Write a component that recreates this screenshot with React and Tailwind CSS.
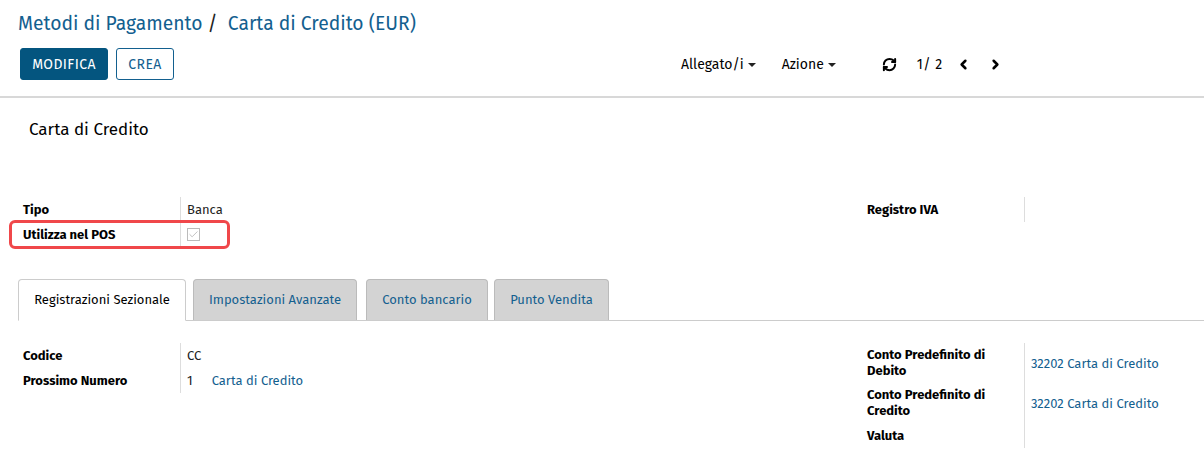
import React from 'react';
import { RefreshCw, ChevronLeft, ChevronRight, Check } from 'lucide-react';

const font = { fontFamily: '"Fira Sans", Lato, "Noto Sans", sans-serif' };

const Caret = () => (
  <span className="inline-block ml-1 align-middle border-x-[4px] border-x-transparent border-t-[4px] border-t-[#222]" />
);

const Field = ({ label, children }) => (
  <div className="flex">
    <div className="w-[157px] shrink-0 font-bold text-[13px] leading-[15px] text-black py-[5px]">{label}</div>
    <div className="flex-1 border-l border-[#ddd] pl-[6px] text-[13px] leading-[15px] flex items-center">{children}</div>
  </div>
);

const TallField = ({ label, children }) => (
  <div className="flex">
    <div className="w-[157px] shrink-0 font-bold text-[13px] leading-[16px] text-black py-[4px]">{label}</div>
    <div className="flex-1 border-l border-[#ddd] pl-[6px] text-[13px] leading-[15px] flex items-center text-[#13608f]">{children}</div>
  </div>
);

export default function App() {
  return (
    <div className="w-[1204px] h-[466px] bg-white text-[#222] relative overflow-hidden" style={font}>
      {/* Control panel */}
      <div className="px-[18px] pt-[12px] pb-[16px] border-b-2 border-[#d8d8d8]">
        <div className="text-[19.3px] leading-[24px] text-[#13608f]">
          Metodi di Pagamento <span className="text-[#222]">/</span>&nbsp; Carta di Credito (EUR)
        </div>
        <div className="flex items-center mt-[12px]">
          <button className="ml-[2px] h-[32px] w-[88px] rounded-[3px] bg-[#04557f] text-white text-[14px] tracking-[0.4px] border border-[#04557f]">MODIFICA</button>
          <button className="ml-[8px] h-[32px] w-[58px] rounded-[3px] bg-white text-[#13608f] text-[14px] tracking-[0.4px] border border-[#13608f]">CREA</button>
          <div className="ml-[507px] flex items-center text-[14px] text-black">
            <span>Allegato/i<Caret /></span>
            <span className="ml-[26px]">Azione<Caret /></span>
            <RefreshCw className="ml-[46px] w-[15px] h-[15px]" strokeWidth={3.2} />
            <span className="ml-[20px] tracking-[0.5px]">1/ 2</span>
            <ChevronLeft className="ml-[13px] w-[15px] h-[15px]" strokeWidth={4} />
            <ChevronRight className="ml-[17px] w-[15px] h-[15px]" strokeWidth={4} />
          </div>
        </div>
      </div>

      {/* Form sheet */}
      <div className="pt-[22px]">
        <div className="pl-[29px] text-[17px] leading-[20px] text-black">Carta di Credito</div>

        <div className="flex mt-[57px] pl-[23px]">
          <div className="flex-1 flex flex-col">
            <Field label="Tipo">Banca</Field>
            <Field label="Utilizza nel POS">
              <span className="w-[13px] h-[13px] border border-[#bbb] flex items-center justify-center">
                <Check className="w-[11px] h-[11px] text-[#bbb]" strokeWidth={2} />
              </span>
            </Field>
          </div>
          <div className="w-[337px] flex flex-col">
            <Field label="Registro IVA"><span className="h-[15px]" /></Field>
          </div>
        </div>

        {/* Tabs */}
        <div className="flex items-end mt-[32px] ml-[18px] border-b border-[#ccc] h-[42px] text-[13px]">
          <div className="h-[42px] w-[168px] -mb-px border border-[#ccc] border-b-white bg-white rounded-t-[4px] flex items-center justify-center text-black">Registrazioni Sezionale</div>
          <div className="ml-[7px] h-[41px] w-[164px] border border-[#bbb] border-b-0 bg-[#d3d3d3] rounded-t-[4px] flex items-center justify-center text-[#13608f]">Impostazioni Avanzate</div>
          <div className="ml-[9px] h-[41px] w-[122px] border border-[#bbb] border-b-0 bg-[#d3d3d3] rounded-t-[4px] flex items-center justify-center text-[#13608f]">Conto bancario</div>
          <div className="ml-[6px] h-[41px] w-[115px] border border-[#bbb] border-b-0 bg-[#d3d3d3] rounded-t-[4px] flex items-center justify-center text-[#13608f]">Punto Vendita</div>
        </div>

        <div className="flex mt-[22px] pl-[23px]">
          <div className="flex-1 flex flex-col self-start">
            <Field label="Codice">CC</Field>
            <Field label="Prossimo Numero">
              <span>1</span>
              <span className="ml-[19px] text-[#13608f]">Carta di Credito</span>
            </Field>
          </div>
          <div className="w-[337px] flex flex-col">
            <TallField label={<>Conto Predefinito di<br />Debito</>}>32202 Carta di Credito</TallField>
            <TallField label={<>Conto Predefinito di<br />Credito</>}>32202 Carta di Credito</TallField>
            <Field label="Valuta"><span className="h-[15px]" /></Field>
          </div>
        </div>
      </div>

      {/* Annotation highlight */}
      <div className="absolute left-[9px] top-[220px] w-[221px] h-[29px] border-[3px] border-[#f0474a] rounded-[6px] pointer-events-none" />
    </div>
  );
}
